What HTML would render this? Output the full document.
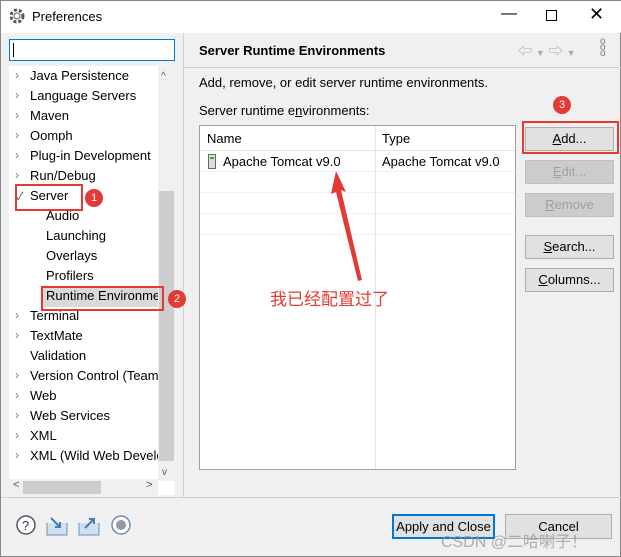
<!DOCTYPE html><html><head><meta charset="utf-8"><style>
*{box-sizing:border-box}body{margin:0;width:621px;height:557px;background:#f0f0f0;font-family:"Liberation Sans","Noto Sans CJK SC",sans-serif;font-size:13px;color:#000;position:relative;overflow:hidden;border:1px solid #888}
.a{position:absolute}
.t{position:absolute;white-space:nowrap}
.btn{position:absolute;left:524px;width:89px;height:24px;background:#e1e1e1;border:1px solid #adadad;text-align:center;line-height:22px}
.dis{color:#a0a0a0;background:#ccc;border-color:#bfbfbf}
.red{position:absolute;border:2px solid #e53935}
.bad{position:absolute;width:18px;height:18px;border-radius:50%;background:#e53935;color:#fff;font-size:11px;text-align:center;line-height:18px}
.chev{position:absolute;left:14px;color:#777;font-size:12px}
</style></head><body>
<div class="a" style="left:0;top:0;width:621px;height:32px;background:#fff"></div>
<svg class="a" style="left:8px;top:7px" width="16" height="16"><circle cx="8" cy="8" r="6" fill="none" stroke="#556" stroke-width="3" stroke-dasharray="3 2"/><circle cx="8" cy="8" r="3" fill="#fff" stroke="#556"/></svg>
<div class="t" style="left:31px;top:8px">Preferences</div>
<div class="t" style="left:500px;top:4px;font-size:16px">—</div>
<div class="a" style="left:545px;top:9px;width:11px;height:11px;border:1px solid #000"></div>
<div class="t" style="left:588px;top:3px;font-size:18px">✕</div>
<div class="a" style="left:8px;top:38px;width:166px;height:22px;background:#fff;border:1px solid #0078d7"></div>
<div class="a" style="left:12px;top:42px;width:1px;height:14px;background:#000"></div>
<div class="a" style="left:8px;top:65px;width:166px;height:429px;background:#fff"></div>
<div class="a" style="left:157px;top:65px;width:17px;height:415px;background:#f0f0f0"></div>
<div class="a" style="left:158px;top:190px;width:15px;height:270px;background:#cdcdcd"></div>
<div class="t" style="left:160px;top:70px;font-size:10px;color:#555">^</div>
<div class="t" style="left:161px;top:466px;font-size:10px;color:#555">v</div>
<div class="a" style="left:8px;top:478px;width:149px;height:16px;background:#f0f0f0"></div>
<div class="a" style="left:22px;top:480px;width:78px;height:13px;background:#cdcdcd"></div>
<div class="t" style="left:12px;top:478px;font-size:11px;color:#555">&lt;</div>
<div class="t" style="left:145px;top:478px;font-size:11px;color:#555">&gt;</div>
<div class="a" style="left:182px;top:32px;width:1px;height:465px;background:#d0d0d0"></div>
<!-- tree -->
<div class="chev" style="top:67px">›</div><div class="t" style="left:29px;top:67px">Java Persistence</div>
<div class="chev" style="top:87px">›</div><div class="t" style="left:29px;top:87px">Language Servers</div>
<div class="chev" style="top:107px">›</div><div class="t" style="left:29px;top:107px">Maven</div>
<div class="chev" style="top:127px">›</div><div class="t" style="left:29px;top:127px">Oomph</div>
<div class="chev" style="top:147px">›</div><div class="t" style="left:29px;top:147px">Plug-in Development</div>
<div class="chev" style="top:167px">›</div><div class="t" style="left:29px;top:167px">Run/Debug</div>
<div class="t" style="left:15px;top:187px;font-size:11px;color:#444">✓</div><div class="t" style="left:29px;top:187px">Server</div>
<div class="t" style="left:45px;top:207px">Audio</div>
<div class="t" style="left:45px;top:227px">Launching</div>
<div class="t" style="left:45px;top:247px">Overlays</div>
<div class="t" style="left:45px;top:267px">Profilers</div>
<div class="a" style="left:42px;top:286px;width:115px;height:20px;background:#cce0f0;background:#d9d9d9"></div>
<div class="t" style="left:45px;top:287px;width:112px;overflow:hidden">Runtime Environments</div>
<div class="chev" style="top:307px">›</div><div class="t" style="left:29px;top:307px">Terminal</div>
<div class="chev" style="top:327px">›</div><div class="t" style="left:29px;top:327px">TextMate</div>
<div class="t" style="left:29px;top:347px">Validation</div>
<div class="chev" style="top:367px">›</div><div class="t" style="left:29px;top:367px;width:128px;overflow:hidden">Version Control (Team)</div>
<div class="chev" style="top:387px">›</div><div class="t" style="left:29px;top:387px">Web</div>
<div class="chev" style="top:407px">›</div><div class="t" style="left:29px;top:407px">Web Services</div>
<div class="chev" style="top:427px">›</div><div class="t" style="left:29px;top:427px">XML</div>
<div class="chev" style="top:447px">›</div><div class="t" style="left:29px;top:447px;width:128px;overflow:hidden">XML (Wild Web Developer)</div>
<div class="red" style="left:14px;top:183px;width:68px;height:27px"></div>
<div class="bad" style="left:84px;top:188px">1</div>
<div class="red" style="left:40px;top:285px;width:123px;height:25px"></div>
<div class="bad" style="left:167px;top:289px">2</div>
<!-- right -->
<div class="a" style="left:183px;top:66px;width:438px;height:1px;background:#d0d0d0"></div>
<div class="t" style="left:198px;top:42px;font-weight:bold">Server Runtime Environments</div>
<div class="t" style="left:517px;top:40px;color:#aaa;font-size:14px">⇦ <span style="font-size:9px">▼</span> ⇨ <span style="font-size:9px">▼</span></div>
<div class="t" style="left:599px;top:38px;color:#777;font-size:10px;line-height:6px">o<br>o<br>o</div>
<div class="t" style="left:198px;top:74px">Add, remove, or edit server runtime environments.</div>
<div class="t" style="left:198px;top:102px">Server runtime e<u>n</u>vironments:</div>
<div class="a" style="left:198px;top:124px;width:317px;height:345px;background:#fff;border:1px solid #a0a0a0"></div>
<div class="a" style="left:374px;top:125px;width:1px;height:343px;background:#e5e5e5"></div>
<div class="a" style="left:199px;top:149px;width:315px;height:1px;background:#e5e5e5"></div>
<div class="t" style="left:206px;top:130px">Name</div><div class="t" style="left:381px;top:130px">Type</div>
<svg class="a" style="left:207px;top:153px" width="8" height="15"><rect x="0.5" y="0.5" width="7" height="14" fill="#ddd" stroke="#666"/><rect x="2" y="3" width="4" height="2" fill="#3a3"/></svg>
<div class="t" style="left:222px;top:153px">Apache Tomcat v9.0</div><div class="t" style="left:381px;top:153px">Apache Tomcat v9.0</div>
<div class="a" style="left:199px;top:170px;width:315px;height:1px;background:#f0f0f0"></div>
<div class="a" style="left:199px;top:191px;width:315px;height:1px;background:#f0f0f0"></div>
<div class="a" style="left:199px;top:212px;width:315px;height:1px;background:#f0f0f0"></div>
<div class="a" style="left:199px;top:233px;width:315px;height:1px;background:#f0f0f0"></div>
<div class="btn" style="top:126px"><u>A</u>dd...</div>
<div class="btn dis" style="top:159px"><u>E</u>dit...</div>
<div class="btn dis" style="top:192px"><u>R</u>emove</div>
<div class="btn" style="top:234px"><u>S</u>earch...</div>
<div class="btn" style="top:267px"><u>C</u>olumns...</div>
<div class="red" style="left:521px;top:120px;width:97px;height:33px"></div>
<div class="bad" style="left:552px;top:95px">3</div>
<svg class="a" style="left:320px;top:165px" width="50" height="120"><polygon points="15,5 10,28 15,26 37,115 41,114 20,24 25,26" fill="#e53935"/></svg>
<div class="t" style="left:269px;top:284px;font-size:17px;color:#e53935">我已经配置过了</div>
<!-- bottom -->
<div class="a" style="left:0;top:496px;width:621px;height:1px;background:#d0d0d0"></div>
<svg class="a" style="left:14px;top:513px" width="120" height="24"><circle cx="11" cy="11" r="9" fill="#fff" stroke="#556" stroke-width="1.5"/><text x="7" y="16" font-size="13" font-family="Liberation Sans" fill="#334">?</text>
<path d="M32 9v12h20V9" fill="#cfe0f0" stroke="#6a8fb8"/><path d="M36 4l9 9M45 8v5h-5" fill="none" stroke="#4a7ab0" stroke-width="2"/>
<path d="M64 9v12h20V9" fill="#cfe0f0" stroke="#6a8fb8"/><path d="M70 14l9-9M74 5h5v5" fill="none" stroke="#4a7ab0" stroke-width="2"/>
<circle cx="106" cy="11" r="9" fill="#fff" stroke="#6a8fb8" stroke-width="1.5"/><circle cx="106" cy="11" r="5" fill="#999"/></svg>
<div class="a" style="left:391px;top:513px;width:103px;height:25px;background:#e1e1e1;border:2px solid #0078d7;text-align:center;line-height:21px">Apply and Close</div>
<div class="a" style="left:504px;top:513px;width:107px;height:25px;background:#e1e1e1;border:1px solid #adadad;text-align:center;line-height:23px">Cancel</div>
<div class="t" style="left:440px;top:527px;font-size:16px;color:rgba(150,150,150,.75)">CSDN @二哈喇子！</div>
</body></html>
